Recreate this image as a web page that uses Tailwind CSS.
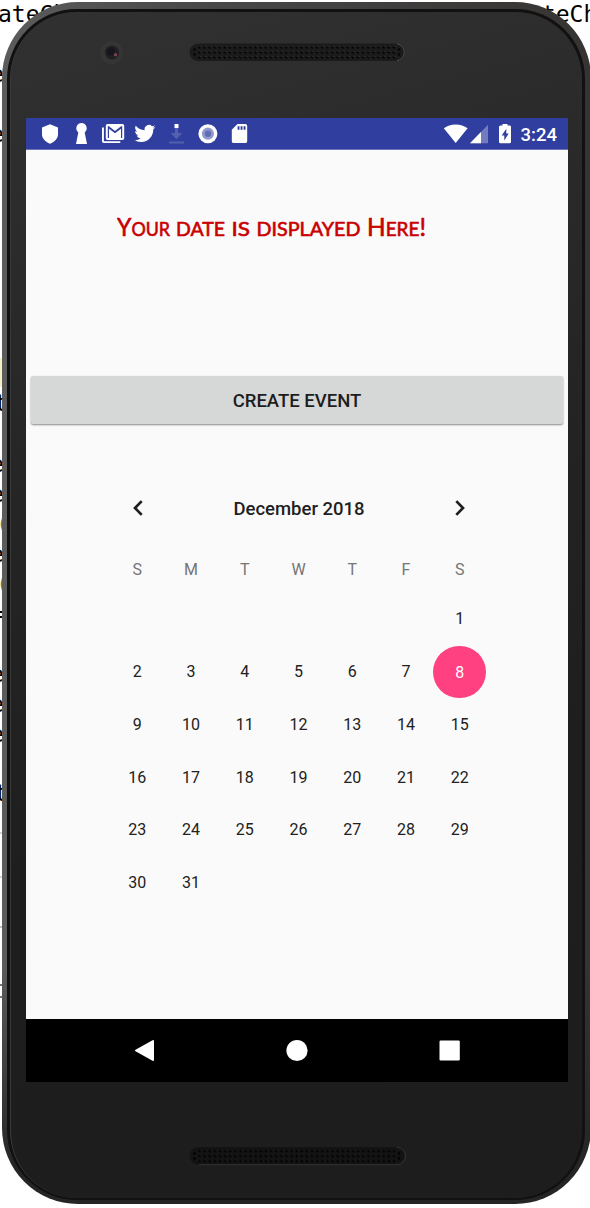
<!DOCTYPE html>
<html lang="en">
<head>
<meta charset="utf-8">
<title>Event calendar</title>
<script src="https://cdn.jsdelivr.net/npm/@tailwindcss/browser@4"></script>
</head>
<body class="bg-white">
<div class="relative w-[590px] h-[1208px] overflow-hidden bg-white font-['Roboto',sans-serif]">

  <!-- Editor window behind the phone -->
  <div class="absolute inset-0 overflow-hidden font-['DejaVu_Sans_Mono',monospace] text-[23px] leading-[28px] text-black whitespace-pre" aria-hidden="true">
    <span class="absolute left-[-2px] top-0">ateCha</span>
    <span class="absolute left-[528px] top-0">ateCh</span>
    <span class="absolute left-0 top-[358px] w-[3px] h-[29px] bg-[#f8eec4]"></span>
    <span class="absolute left-[-10px] top-[60px]">e</span>
    <span class="absolute left-[-10px] top-[120px]">e</span>
    <span class="absolute left-[-6px] top-[389px]">t</span>
    <span class="absolute left-[-10px] top-[450px]">e</span>
    <span class="absolute left-[-10px] top-[480px]">e</span>
    <span class="absolute left-[-4px] top-[510px] text-[#3d8b40]">(</span>
    <span class="absolute left-[-10px] top-[540px]">e</span>
    <span class="absolute left-[-4px] top-[570px] text-[#3d8b40]">(</span>
    <span class="absolute left-[-10px] top-[600px]">=</span>
    <span class="absolute left-[-10px] top-[660px]">e</span>
    <span class="absolute left-[-10px] top-[690px]">e</span>
    <span class="absolute left-[-10px] top-[720px]">e</span>
    <span class="absolute left-[-6px] top-[779px]">t</span>
    <span class="absolute left-0 top-[832px] w-[3px] h-[2px] bg-[#d4d4d4]"></span>
    <span class="absolute left-0 top-[876px] w-[3px] h-[2px] bg-[#d4d4d4]"></span>
    <span class="absolute left-0 top-[926px] w-[3px] h-[2px] bg-[#c4c4c4]"></span>
    <span class="absolute left-0 top-[984px] w-[3px] h-[2px] bg-[#777]"></span>
    <span class="absolute left-0 top-[996px] w-[3px] h-[2px] bg-[#777]"></span>
  </div>

  <!-- Phone body -->
  <div class="relative mt-[2px] ml-[2px] w-[589px] h-[1202px] rounded-[76px] bg-[linear-gradient(to_bottom,transparent_80%,#262525_97%),linear-gradient(to_right,#5c5c5c_0%,#4a4a4a_30%,#363433_100%)] pt-[7px] pb-[4px] pl-[5px] pr-[6px]">
    <div class="size-full rounded-[70px] bg-[#111] pt-[3px] pb-[2px] pl-[3px] pr-[3px]">
      <div class="size-full rounded-[67px] border-l border-[#3a3a3a] bg-[linear-gradient(165deg,#313131_0%,#2b2b2b_18%,#242424_40%,#1e1e1e_65%,#1d1d1d_100%)] flex flex-col">

        <!-- Camera and earpiece -->
        <svg class="block w-[572px] h-[106px] shrink-0" viewBox="11 12 572 106" preserveAspectRatio="xMinYMin meet">
          <defs>
            <pattern id="holes" x="197" y="45" width="5.12" height="5" patternUnits="userSpaceOnUse">
              <circle cx="2.4" cy="2.5" r="1.25" fill="#050505"/>
              <rect x="2.9" y="1.1" width=".9" height=".9" fill="#444"/>
            </pattern>
          </defs>
          <circle cx="111.500" cy="52.500" r="11.500" fill="#363535"/>
          <circle cx="112" cy="52.500" r="7" fill="#221f24"/>
          <circle cx="111" cy="51.500" r="4" fill="#17151d"/>
          <circle cx="115.500" cy="54.800" r="1.700" fill="#7a4350"/>
          <rect x="189.500" y="43.500" width="215.500" height="17.500" rx="8.750" fill="#1b1b1b"/>
          <path d="M397 43.800a8.600 8.600 0 0 1 0 17" fill="none" stroke="#5a5a5a" stroke-width=".8"/>
          <rect x="197" y="45" width="199.700" height="15" fill="url(#holes)"/>
          <g fill="#050505"><circle cx="194.500" cy="49.500" r="1.300"/><circle cx="194.500" cy="54.500" r="1.300"/><circle cx="399" cy="49.500" r="1.300"/><circle cx="399" cy="54.500" r="1.300"/></g>
        </svg>

        <!-- Screen -->
        <div class="ml-[15px] w-[542px] h-[964px] shrink-0 flex flex-col bg-[#fafafa]">
          <div class="h-[32px] shrink-0 bg-[#303f9f] border-b border-[#6b74b8]">
            <svg class="block w-[542px] h-[31px]" viewBox="26 118 542 31" fill="#fff">
              <path d="M50 124.300l8 3.200v6.500c0 4.500-3.200 7.800-8 9.700-4.800-1.900-8-5.200-8-9.700v-6.500z"/>
              <path d="M81.500 123a5.300 5.300 0 0 1 3.200 9.400l2.300 11.600H76l2.300-11.600a5.300 5.300 0 0 1 3.200-9.400z"/>
              <path fill-rule="evenodd" d="M107.600 124h14.800a1.800 1.800 0 0 1 1.800 1.800v12.400a1.800 1.800 0 0 1-1.800 1.800h-14.800a1.800 1.800 0 0 1-1.800-1.800v-12.400a1.800 1.800 0 0 1 1.800-1.800zM107.800 126.200v11.800h1.200v-9.300l6 4.500 6-4.500v9.300h1.200v-11.800h-1.100l-6.100 4.700-6.100-4.700z"/>
              <path d="M102 127.500h1.900v13.700h16.400v1.900h-16.500a1.800 1.800 0 0 1-1.800-1.800z"/>
              <path transform="translate(134.300 122.900) scale(.88)" d="M23.950 4.570a10 10 0 0 1-2.820.77 4.960 4.960 0 0 0 2.160-2.720c-.95.550-2 .950-3.130 1.180a4.920 4.920 0 0 0-8.380 4.480C7.690 8.090 4.070 6.130 1.640 3.160a4.820 4.820 0 0 0-.67 2.480c0 1.710.87 3.210 2.190 4.100a4.900 4.900 0 0 1-2.230-.62v.06a4.920 4.920 0 0 0 3.950 4.830 5 5 0 0 1-2.210.08 4.940 4.940 0 0 0 4.600 3.420A9.870 9.870 0 0 1 0 19.540a13.990 13.990 0 0 0 7.550 2.210c9.050 0 14-7.500 14-13.980 0-.21 0-.42-.02-.63a9.940 9.940 0 0 0 2.420-2.570z"/>
              <path d="M175 127.500h3v5.500h4.200l-5.700 6.200-5.700-6.200h4.200zM169 141.500h15v2h-15z" fill="#5460af"/>
              <path d="M174.500 124h4v4h-4z"/>
              <circle cx="207.900" cy="133.700" r="9.500"/><circle cx="207.900" cy="133.700" r="6.100" fill="#9299cd"/><circle cx="207.900" cy="133.700" r="3.200" fill="#626db6"/>
              <path fill-rule="evenodd" d="M237.500 124h7.800a1.900 1.900 0 0 1 1.900 1.900v15.300a1.900 1.900 0 0 1-1.900 1.900h-11.600a1.900 1.900 0 0 1-1.900-1.900v-11.400zM237.600 126.200v3.600h1.900v-3.600zM240.600 126.200v3.600h1.900v-3.600zM243.600 126.200v3.600h1.900v-3.600z"/>
              <path d="M455.700 143l-11.900-14.800c3.300-2.500 7.300-3.800 11.900-3.800s8.600 1.300 11.900 3.800z"/>
              <path d="M488 124.700v18.500h-18z" fill="#737cbe"/><path d="M481 131.900v11.300h-11z"/>
              <path fill-rule="evenodd" d="M502.500 124h5v1.500h2a1.500 1.500 0 0 1 1.500 1.500v14.700a1.500 1.500 0 0 1-1.500 1.500h-9a1.500 1.500 0 0 1-1.500-1.500v-14.700a1.500 1.500 0 0 1 1.500-1.500h2zM506.300 128.800l-4.600 6.800h2.600v4.800l4.400-7h-2.400z"/>
              <text x="520.500" y="141" font-size="18.500" font-weight="500" textLength="36.500">3:24</text>
            </svg>
          </div>

          <h1 class="mt-[62px] ml-[91px] h-[34px]">
            <svg class="block w-[320px] h-[34px] font-['Lato',sans-serif]" viewBox="0 0 320 34" fill="#c90000" stroke="#c90000" stroke-width=".6" font-size="19">
              <text x="0" y="24.300" textLength="53" lengthAdjust="spacingAndGlyphs"><tspan font-size="24.500">Y</tspan>OUR</text>
              <text x="59" y="24.300" textLength="49" lengthAdjust="spacingAndGlyphs">DATE</text>
              <text x="114.500" y="24.300" textLength="18.500" lengthAdjust="spacingAndGlyphs">IS</text>
              <text x="139.500" y="24.300" textLength="104" lengthAdjust="spacingAndGlyphs">DISPLAYED</text>
              <text x="250" y="24.300" textLength="59" lengthAdjust="spacingAndGlyphs"><tspan font-size="24.500">H</tspan>ERE<tspan font-size="24.500">!</tspan></text>
            </svg>
          </h1>

          <button class="mt-[130px] ml-[5px] w-[532px] h-[48px] shrink-0 rounded-[2px] bg-[#d6d8d7] shadow-[0_1px_2px_rgba(0,0,0,0.45)] text-[18.500px] pt-[2px] leading-[46px] font-medium text-[#1d1d1d]">CREATE EVENT</button>

          <section class="mt-[60px] ml-[84.500px] w-[376px]">
            <div class="h-[48px] flex items-center justify-between pl-[19px] pr-[18px] text-[#1f1f1f]">
              <svg class="w-[16px] h-[20px]" viewBox="0 0 16 20" fill="none" stroke="currentColor" stroke-width="2.700"><path d="M11.700 3.100L5 10l6.700 6.900"/></svg>
              <h2 class="pt-[3px] text-[18.500px] font-medium whitespace-nowrap">December 2018</h2>
              <svg class="w-[16px] h-[20px]" viewBox="0 0 16 20" fill="none" stroke="currentColor" stroke-width="2.700"><path d="M4.300 3.100l6.700 6.900-6.700 6.900"/></svg>
            </div>
            <div class="mt-[26px] grid grid-cols-7 h-[24px] leading-[24px] text-center text-[16px] text-[#757575]">
              <span>S</span><span>M</span><span>T</span><span>W</span><span>T</span><span>F</span><span>S</span>
            </div>
            <div class="mt-[11px] grid grid-cols-7 auto-rows-[52.750px] items-center text-center text-[16px] text-[#212121]">
              <span class="col-start-7">1</span>
              <span>2</span><span>3</span><span>4</span><span>5</span><span>6</span><span>7</span>
              <span class="mx-auto size-[52.500px] leading-[53px] rounded-full bg-[#ff4081] text-white">8</span>
              <span>9</span><span>10</span><span>11</span><span>12</span><span>13</span><span>14</span><span>15</span>
              <span>16</span><span>17</span><span>18</span><span>19</span><span>20</span><span>21</span><span>22</span>
              <span>23</span><span>24</span><span>25</span><span>26</span><span>27</span><span>28</span><span>29</span>
              <span>30</span><span>31</span>
            </div>
          </section>

          <div class="mt-auto h-[63px] shrink-0 bg-black">
            <svg class="block w-[542px] h-[63px]" viewBox="26 1019 542 63" fill="#fff" stroke="#fff" stroke-linejoin="round">
              <path d="M136 1050.500l17-9.500v19z" stroke-width="2"/>
              <circle cx="297" cy="1050.500" r="10.600" stroke="none"/>
              <rect x="439.500" y="1040.500" width="20.300" height="20" rx="1.200" stroke="none"/>
            </svg>
          </div>
        </div>

        <!-- Bottom speaker -->
        <svg class="block w-[572px] h-[100px] shrink-0" viewBox="11 1082 572 100" preserveAspectRatio="xMinYMin meet">
          <defs>
            <pattern id="holes2" x="197" y="1148.500" width="5.120" height="5" patternUnits="userSpaceOnUse">
              <circle cx="2.600" cy="2.500" r="1.300" fill="#010101"/>
              <rect x="3.100" y="1.100" width=".8" height=".8" fill="#2c2c2c"/>
            </pattern>
          </defs>
          <rect x="189.500" y="1147" width="215" height="17.500" rx="8.750" fill="#131313"/>
          <path d="M397 1147.400a8.600 8.600 0 0 1 0 17.300H199" fill="none" stroke="#383838" stroke-width=".8"/>
          <rect x="197" y="1148.500" width="199.700" height="15" fill="url(#holes2)"/>
          <g fill="#010101"><circle cx="194.500" cy="1153.500" r="1.300"/><circle cx="194.500" cy="1158.500" r="1.300"/><circle cx="399" cy="1153.500" r="1.300"/><circle cx="399" cy="1158.500" r="1.300"/></g>
        </svg>
      </div>
    </div>
  </div>
</div>
</body>
</html>
